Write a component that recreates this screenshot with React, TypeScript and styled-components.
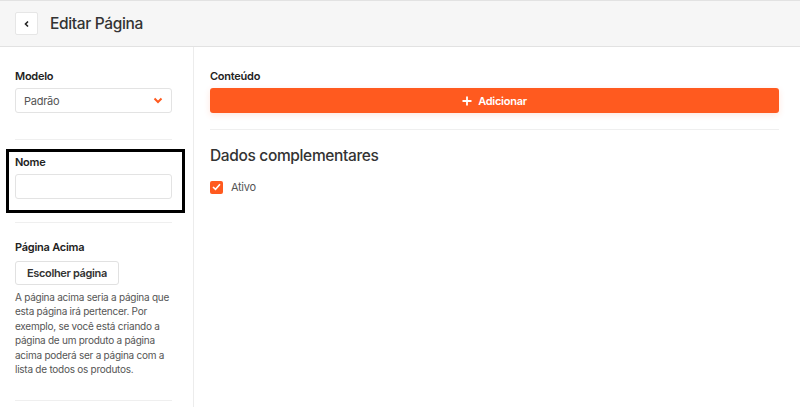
import React, { useState } from 'react';
import styled, { createGlobalStyle } from 'styled-components';

const orange = '#ff5a1f';

const GlobalStyle = createGlobalStyle`
  body {
    margin: 0;
    background: #fff;
    font-family: Inter, 'Noto Sans', sans-serif;
    color: #333;
  }
  * { box-sizing: border-box; }
`;

const Page = styled.div`
  width: 800px;
  height: 407px;
  overflow: hidden;
  display: flex;
  flex-direction: column;
`;

const Header = styled.header`
  height: 47px;
  flex-shrink: 0;
  display: flex;
  align-items: center;
  gap: 12px;
  padding-left: 15px;
  background: #f6f6f6;
  border-top: 1px solid #e2e2e2;
  border-bottom: 1px solid #e2e2e2;
`;

const BackBtn = styled.button`
  width: 23px;
  height: 23px;
  padding: 0;
  display: flex;
  align-items: center;
  justify-content: center;
  background: #fff;
  border: 1px solid #e6e6e6;
  border-radius: 2px;
  color: #222;
`;

const Title = styled.h1`
  margin: 0;
  font-size: 15.5px;
  letter-spacing: -0.35px;
  font-weight: 500;
  color: #333;
`;

const Body = styled.div`
  flex: 1;
  display: flex;
`;

const Sidebar = styled.aside`
  width: 194px;
  flex-shrink: 0;
  padding: 7px 21px 0 15px;
  border-right: 1px solid #ececec;
`;

const Section = styled.div<{ head?: number; tail?: number }>`
  position: relative;
  padding: ${p => p.head ?? 15}px 0 ${p => p.tail ?? 24}px;
  border-bottom: 1px solid #efefef;
`;

const Highlight = styled.div`
  position: absolute;
  left: -9px;
  top: 9px;
  width: 179px;
  height: 64px;
  border: 3px solid #000;
  pointer-events: none;
`;

const Label = styled.div`
  font-size: 11px;
  letter-spacing: -0.25px;
  font-weight: 600;
  line-height: 14px;
  color: #222;
  margin-bottom: 5px;
`;

const SelectBox = styled.div`
  height: 25px;
  display: flex;
  align-items: center;
  justify-content: space-between;
  padding: 0 8px 0 8px;
  border: 1px solid #e3e3e3;
  border-radius: 3px;
  font-size: 11px;
  letter-spacing: -0.25px;
  color: #555;
`;

const TextInput = styled.input`
  display: block;
  width: 100%;
  height: 25px;
  border: 1px solid #e3e3e3;
  border-radius: 3px;
  font: inherit;
  font-size: 11px;
  padding: 0 8px;
  outline: none;
`;

const GhostButton = styled.button`
  height: 24px;
  margin-top: 2px;
  padding: 0 11px;
  background: #fff;
  border: 1px solid #e1e1e1;
  border-radius: 3px;
  font-family: inherit;
  font-size: 11px;
  letter-spacing: -0.35px;
  font-weight: 600;
  color: #333;
`;

const Help = styled.p`
  margin: 5px 0 0;
  font-size: 10px;
  letter-spacing: -0.25px;
  line-height: 14.4px;
  color: #555;
`;

const Main = styled.main`
  flex: 1;
  padding: 22px 21px 0 16px;
`;

const AddButton = styled.button`
  width: 100%;
  height: 25px;
  display: flex;
  align-items: center;
  justify-content: center;
  gap: 6px;
  background: ${orange};
  border: none;
  border-radius: 3px;
  box-shadow: 0 2px 6px rgba(255, 90, 31, 0.15);
  color: #fff;
  font-family: inherit;
  font-size: 11px;
  letter-spacing: -0.25px;
  font-weight: 600;
`;

const Divider = styled.hr`
  margin: 16px 0 0;
  border: none;
  border-top: 1px solid #efefef;
`;

const SubTitle = styled.h2`
  margin: 16px 0 0;
  font-size: 15.5px;
  letter-spacing: -0.35px;
  font-weight: 500;
  line-height: 20px;
  color: #333;
`;

const CheckRow = styled.label`
  margin-top: 14px;
  display: flex;
  align-items: center;
  gap: 8px;
  font-size: 11px;
  letter-spacing: -0.3px;
  color: #555;
`;

const CheckBox = styled.span<{ on: boolean }>`
  width: 13px;
  height: 13px;
  border-radius: 2px;
  display: flex;
  align-items: center;
  justify-content: center;
  background: ${p => (p.on ? orange : '#fff')};
  border: ${p => (p.on ? 'none' : '1px solid #ccc')};
`;

const App = () => {
  const [active, setActive] = useState(true);

  return (
    <>
      <GlobalStyle />
      <Page>
        <Header>
          <BackBtn>
            <svg width="8" height="8" viewBox="0 0 8 8">
              <path d="M5 1.5 L2.5 4 L5 6.5" stroke="#222" strokeWidth="1.6" fill="none" />
            </svg>
          </BackBtn>
          <Title>Editar Página</Title>
        </Header>
        <Body>
          <Sidebar>
            <Section tail={26}>
              <Label>Modelo</Label>
              <SelectBox>
                Padrão
                <svg width="10" height="7" viewBox="0 0 10 7">
                  <path d="M1.5 1.5 L5 5 L8.5 1.5" stroke={orange} strokeWidth="2" fill="none" />
                </svg>
              </SelectBox>
            </Section>
            <Section tail={23}>
              <Highlight />
              <Label>Nome</Label>
              <TextInput />
            </Section>
            <Section head={17}>
              <Label>Página Acima</Label>
              <GhostButton>Escolher página</GhostButton>
              <Help>
                A página acima seria a página que esta página irá pertencer. Por
                exemplo, se você está criando a página de um produto a página
                acima poderá ser a página com a lista de todos os produtos.
              </Help>
            </Section>
          </Sidebar>
          <Main>
            <Label>Conteúdo</Label>
            <AddButton>
              <svg width="10" height="10" viewBox="0 0 10 10">
                <path d="M5 0.5 V9.5 M0.5 5 H9.5" stroke="#fff" strokeWidth="1.8" />
              </svg>
              Adicionar
            </AddButton>
            <Divider />
            <SubTitle>Dados complementares</SubTitle>
            <CheckRow onClick={() => setActive(!active)}>
              <CheckBox on={active}>
                {active && (
                  <svg width="9" height="8" viewBox="0 0 9 8">
                    <path d="M1 4 L3.5 6.3 L8 1.3" stroke="#fff" strokeWidth="1.6" fill="none" />
                  </svg>
                )}
              </CheckBox>
              Ativo
            </CheckRow>
          </Main>
        </Body>
      </Page>
    </>
  );
};

export default App;
